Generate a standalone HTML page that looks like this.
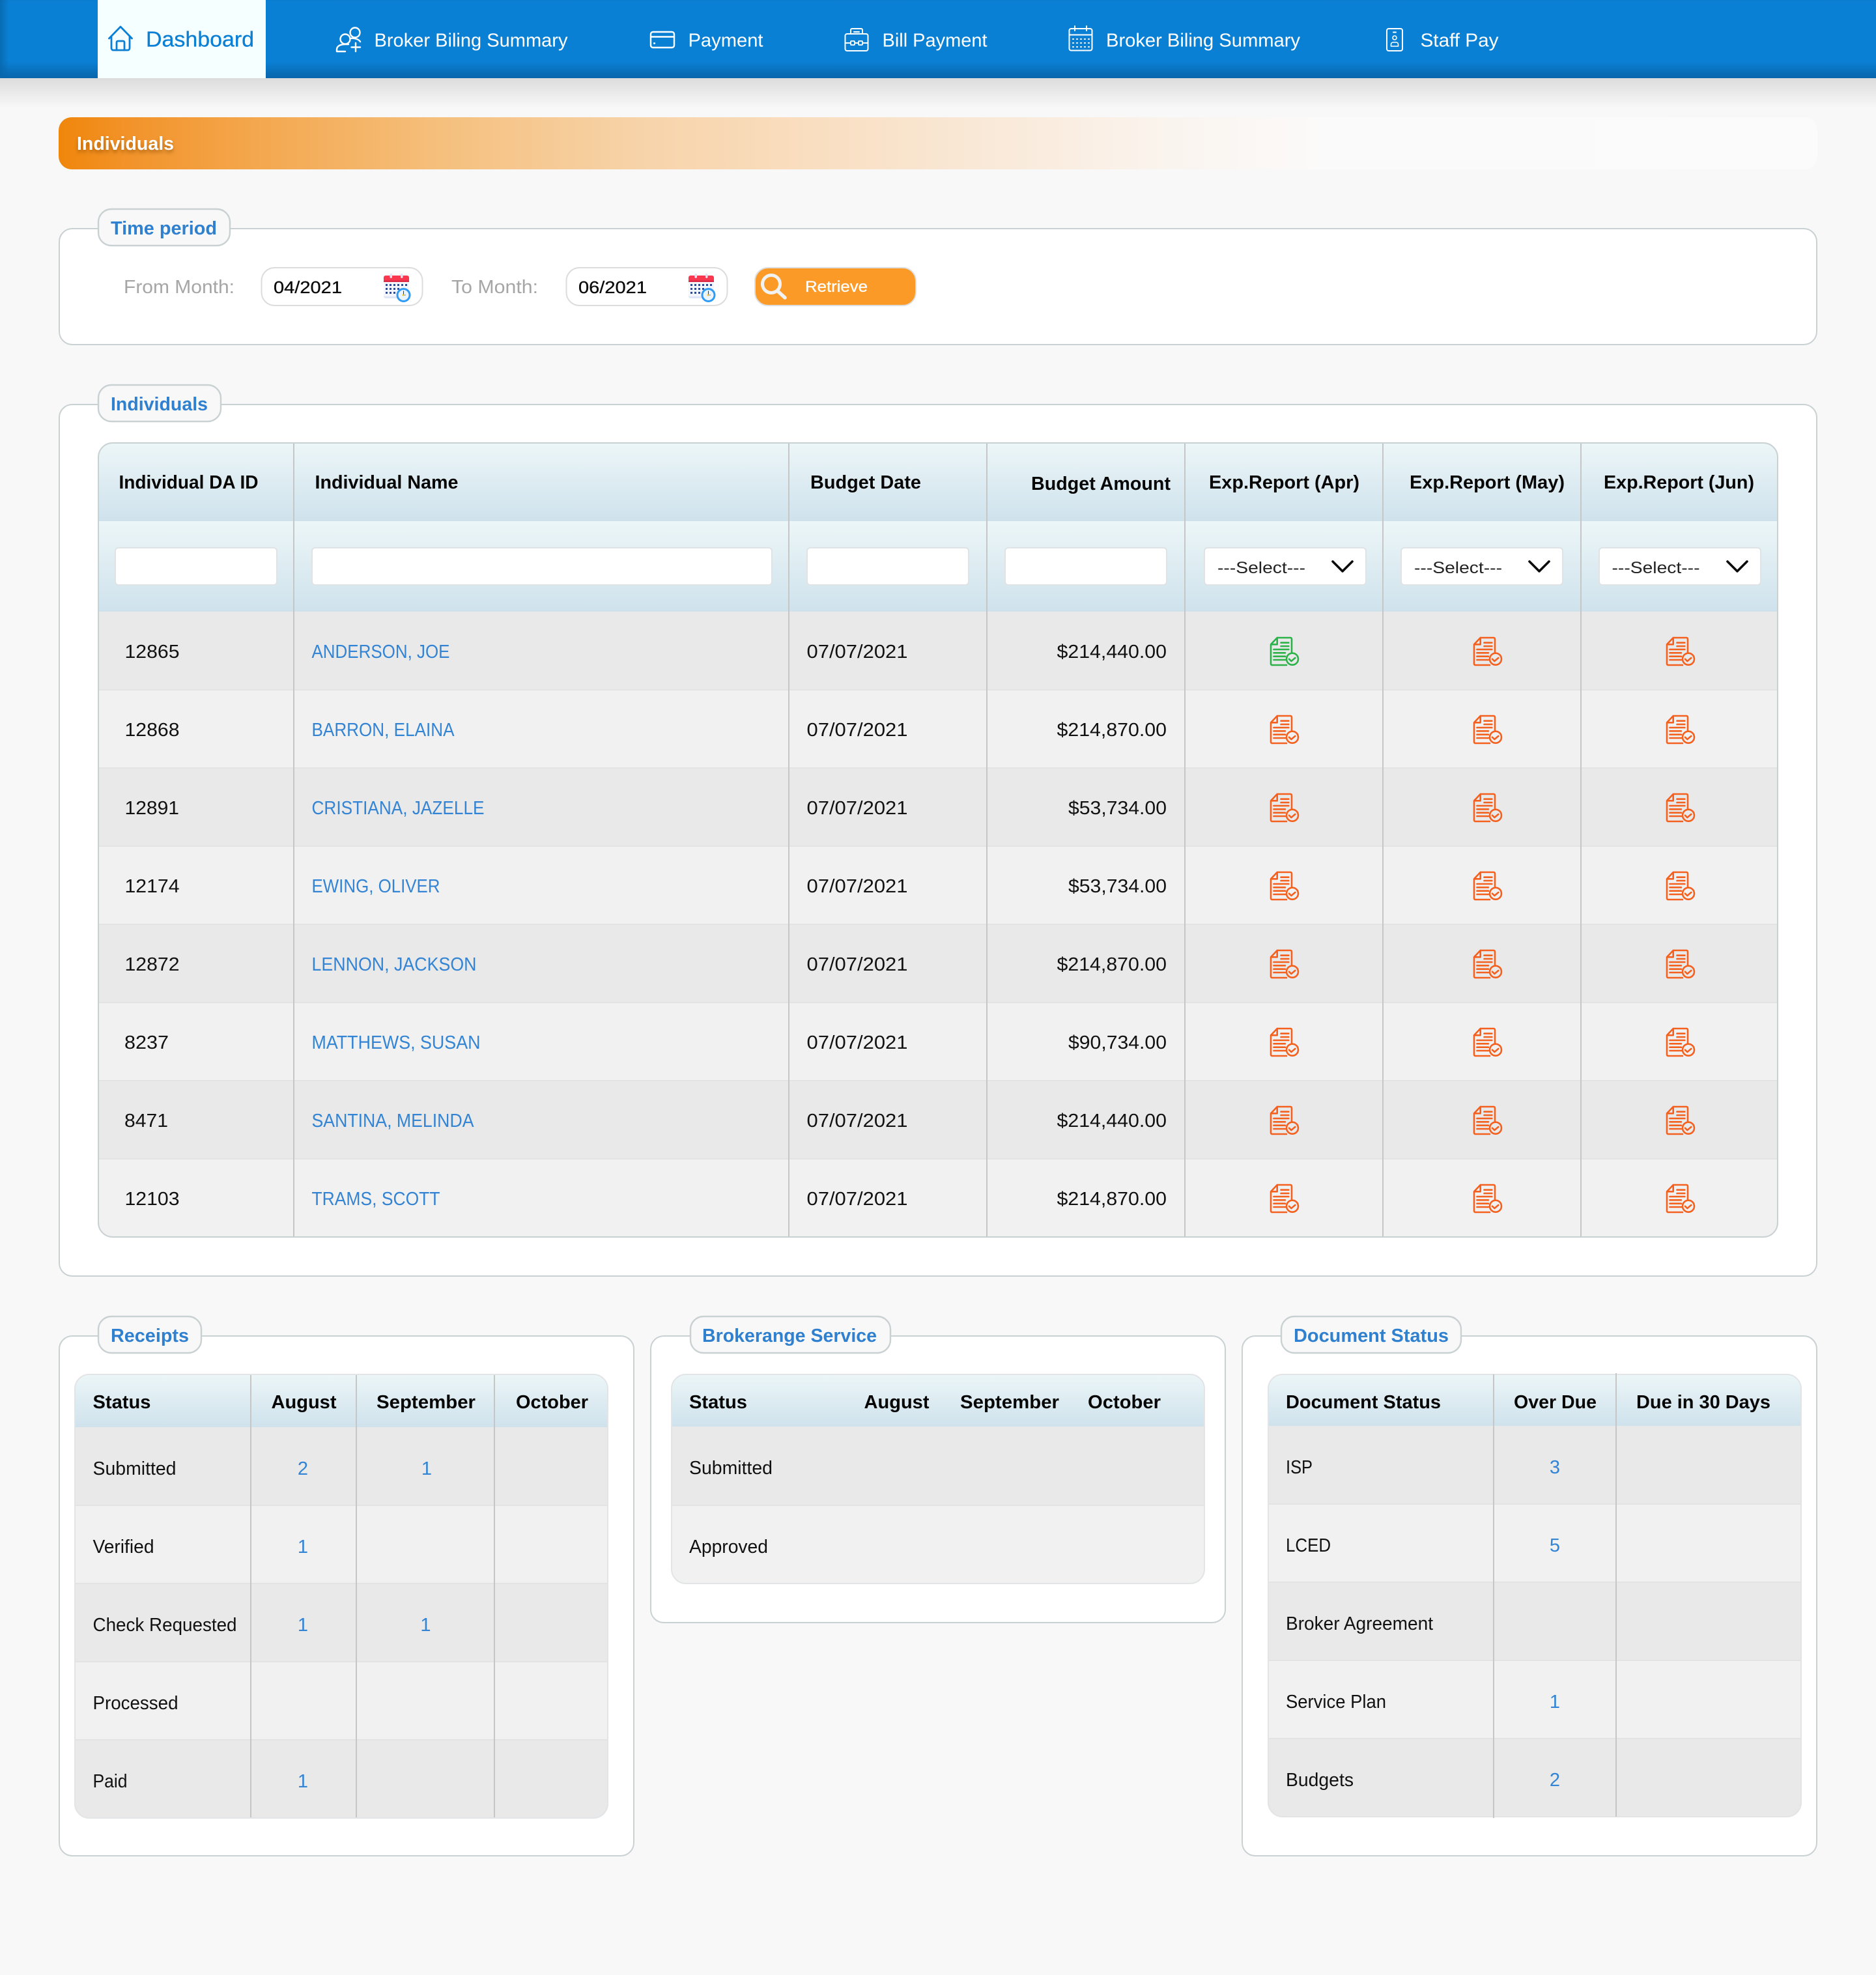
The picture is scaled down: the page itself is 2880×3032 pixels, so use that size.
<!DOCTYPE html>
<html lang="en"><head><meta charset="utf-8"><title>Individuals</title>
<style>
html,body{margin:0;padding:0;background:#f8f8f8;width:2880px;height:3032px;overflow:hidden}
svg{display:block;position:absolute;left:0;top:0}
text{font-family:"Liberation Sans",sans-serif;white-space:pre}
.r{font-size:29px;fill:#111}
.l{font-size:29px;fill:#3384d4}
.h{font-size:29px;font-weight:700;fill:#060606}
.g{font-size:29px;font-weight:700;fill:#3080d0}
.n{font-size:29px;fill:#fff}
.s{font-size:25px;fill:#222}
.v{font-size:25.5px;fill:#0a0a0a;stroke:#0a0a0a;stroke-width:.3}
.m{font-size:29px;fill:#a6a6a6}
.c{text-anchor:middle}
.f{fill:#c9d1d3}
</style></head><body>
<svg width="2880" height="3032" viewBox="0 0 2880 3032" xmlns="http://www.w3.org/2000/svg">
<defs>
<linearGradient id="nav" x1="0" y1="0" x2="0" y2="1"><stop offset="0" stop-color="#0a7dd0"/><stop offset=".05" stop-color="#0a80d5"/><stop offset=".78" stop-color="#0a80d5"/><stop offset="1" stop-color="#0866ab"/></linearGradient>
<linearGradient id="navl" x1="0" y1="0" x2="1" y2="0"><stop offset="0" stop-color="#0866ab" stop-opacity=".8"/><stop offset="1" stop-color="#0866ab" stop-opacity="0"/></linearGradient>
<linearGradient id="sh" x1="0" y1="0" x2="0" y2="1"><stop offset="0" stop-color="#dcdcdc"/><stop offset=".35" stop-color="#e6e6e6"/><stop offset="1" stop-color="#f8f8f8"/></linearGradient>
<linearGradient id="or" gradientUnits="userSpaceOnUse" x1="90" y1="0" x2="2790" y2="0">
<stop offset="0" stop-color="#f0860b"/><stop offset=".04" stop-color="#f2932a"/><stop offset=".115" stop-color="#f4a84f"/><stop offset=".22" stop-color="#f5c07e"/><stop offset=".33" stop-color="#f7d3a9"/><stop offset=".41" stop-color="#f9dcbc"/><stop offset=".52" stop-color="#f9e8d6"/><stop offset=".63" stop-color="#faf4ee"/><stop offset=".72" stop-color="#fbfafa"/><stop offset="1" stop-color="#fbfbfb"/></linearGradient>
<linearGradient id="th" x1="0" y1="0" x2="0" y2="1"><stop offset="0" stop-color="#ecf6f8"/><stop offset="1" stop-color="#cfe2ec"/></linearGradient>
<clipPath id="c1"><rect x="151" y="680" width="2578" height="1219" rx="22"/></clipPath>
<clipPath id="c2"><rect x="115" y="2110" width="818" height="681" rx="22"/></clipPath>
<clipPath id="c3"><rect x="1031" y="2110" width="818" height="321" rx="22"/></clipPath>
<clipPath id="c4"><rect x="1947" y="2110" width="818" height="679" rx="22"/></clipPath>
<g id="doc" fill="none" stroke-width="2.600" stroke-linecap="round" stroke-linejoin="round">
<path d="M10.7 1H31a2 2 0 0 1 2 2V23.500M10.7 1L1 11.300V41a2 2 0 0 0 2 2H25"/>
<path d="M10.7 2V11.300H1.500"/>
<path d="M16.500 8.700H28.300M16.500 14H28.300M5.500 19H28.300M5.500 24.300H23M5.500 29.700H23M5.500 35H23"/>
<circle cx="34" cy="33.700" r="9"/>
<path d="M29 33.800L32.300 37L38.300 32"/>
</g>
<g id="cal">
<rect x="0" y="5" width="39" height="33" rx="3" fill="#dfe6f8"/>
<rect x="0" y="5" width="39" height="30" rx="2" fill="#f4f6fd"/>
<path d="M0 13V6a3 3 0 0 1 3-3H36a3 3 0 0 1 3 3V13Z" fill="#f9384f"/>
<rect x="0" y="10.500" width="39" height="2.500" fill="#dc2a48"/>
<rect x="9.500" y="0" width="3.500" height="7" rx="1.700" fill="#dbe5f6"/>
<rect x="26" y="0" width="3.500" height="7" rx="1.700" fill="#dbe5f6"/>
<g fill="#2f4a8f"><rect x="3" y="16" width="3" height="3"/><rect x="9" y="16" width="3" height="3"/><rect x="15" y="16" width="3" height="3"/><rect x="21" y="16" width="3" height="3"/><rect x="27" y="16" width="3" height="3"/><rect x="33" y="16" width="3" height="3"/><rect x="3" y="22" width="3" height="3"/><rect x="9" y="22" width="3" height="3"/><rect x="15" y="22" width="3" height="3"/><rect x="21" y="22" width="3" height="3"/><rect x="3" y="28" width="3" height="3"/><rect x="9" y="28" width="3" height="3"/><rect x="15" y="28" width="3" height="3"/></g>
<circle cx="30.500" cy="33" r="9.500" fill="#e9f4fd" stroke="#2f9bf5" stroke-width="3"/>
<path d="M30.500 33V26.500" stroke="#333" stroke-width="1"/><path d="M30.500 33H34" stroke="#8a98a8" stroke-width="1.200"/><circle cx="30" cy="33" r="1.400" fill="#f5c518"/>
</g>
<path id="chev" d="M0 0L15 15L30 0" fill="none" stroke="#0b0b0b" stroke-width="3.600" stroke-linecap="round" stroke-linejoin="round"/>
</defs>

<rect width="2880" height="3032" fill="#f8f8f8"/>
<!-- nav -->
<rect x="0" y="120" width="2880" height="46" fill="url(#sh)"/>
<rect width="2880" height="120" fill="url(#nav)"/>
<rect width="14" height="120" fill="url(#navl)"/>
<rect x="150" width="258" height="120" fill="#f5ffff"/>
<g fill="none" stroke="#0a7fd4" stroke-width="2.800" stroke-linejoin="round" stroke-linecap="round">
<path d="M167.500 59L185 41L202.500 59M171 56V74a3 3 0 0 0 3 3H196a3 3 0 0 0 3-3V56"/>
<path d="M179 77V65a2 2 0 0 1 2-2H189a2 2 0 0 1 2 2V77"/>
</g>
<text x="224" y="71.500" font-size="33" fill="#0a7fd4" stroke="#0a7fd4" stroke-width=".3" textLength="166" lengthAdjust="spacingAndGlyphs">Dashboard</text>
<g fill="none" stroke="#fff" stroke-width="2.400" stroke-linecap="round" stroke-linejoin="round">
<circle cx="545" cy="50" r="7.500"/><circle cx="530" cy="60" r="7.500"/>
<path d="M517 79V76C517 71 522 68 530 68H535M538 59C543 58 551 60 553 64M517 79H530M546 66V79M539.500 72.500H553"/>
<rect x="999" y="49" width="36" height="24" rx="3.500"/><path d="M999 56.500H1035M1004 66.500H1005"/>
<rect x="1297.500" y="52" width="35" height="26" rx="3" stroke-width="2"/><path stroke-width="2" d="M1306 52V46a2 2 0 0 1 2-2H1322a2 2 0 0 1 2 2V52M1311 49H1319M1297.500 66H1306M1324 66H1332.500M1313 66H1317"/><rect x="1306" y="63" width="6" height="6" rx="1" stroke-width="1.800"/><rect x="1318" y="63" width="6" height="6" rx="1" stroke-width="1.800"/>
<rect x="1641.500" y="44" width="35" height="33.500" rx="3" stroke-width="2"/><path stroke-width="2" d="M1641.500 53.500H1676.500M1650 40V47M1668 40V47"/>
<path d="M1647 60H1648M1653 60H1654M1659 60H1660M1665 60H1666M1671 60H1672M1647 66H1648M1653 66H1654M1659 66H1660M1665 66H1666M1671 66H1672M1647 72H1648M1653 72H1654M1659 72H1660M1665 72H1666M1671 72H1672" stroke-width="2"/>
<rect x="2129" y="44" width="24" height="34" rx="3" stroke-width="2"/><path stroke-width="2" d="M2139 49.500H2143"/><circle cx="2141" cy="58" r="3" stroke-width="1.600"/><path stroke-width="1.600" d="M2135.500 71V68a3 3 0 0 1 3-3H2143.500a3 3 0 0 1 3 3V71Z"/>
</g>
<text class="n" x="574.500" y="71.500" textLength="297" lengthAdjust="spacingAndGlyphs">Broker Biling Summary</text>
<text class="n" x="1056.500" y="71.500" textLength="115" lengthAdjust="spacingAndGlyphs">Payment</text>
<text class="n" x="1354.500" y="71.500" textLength="161" lengthAdjust="spacingAndGlyphs">Bill Payment</text>
<text class="n" x="1698" y="71.500" textLength="298" lengthAdjust="spacingAndGlyphs">Broker Biling Summary</text>
<text class="n" x="2180.500" y="71.500" textLength="120" lengthAdjust="spacingAndGlyphs">Staff Pay</text>

<!-- page title -->
<rect x="90" y="180" width="2700" height="80" rx="20" fill="url(#or)"/>
<text x="118" y="230" font-size="29" font-weight="700" fill="#fff" textLength="149" lengthAdjust="spacingAndGlyphs" style="filter:drop-shadow(0 4px 3px rgba(130,70,0,.55))">Individuals</text>

<!-- time period -->
<rect x="91" y="351" width="2698" height="178" rx="20" fill="#fff" stroke="#c9d1d3" stroke-width="2"/>
<rect x="151" y="321" width="202" height="56" rx="20" fill="#f8f8f8" stroke="#c9d1d3" stroke-width="2.400"/>
<text class="g" x="170" y="360" textLength="163" lengthAdjust="spacingAndGlyphs">Time period</text>
<text class="m" x="190" y="450" textLength="170" lengthAdjust="spacingAndGlyphs">From Month:</text>
<rect x="401.500" y="411" width="247" height="58" rx="20" fill="#fff" stroke="#dcdcdc" stroke-width="2"/>
<text class="v" x="420" y="450" textLength="105" lengthAdjust="spacingAndGlyphs">04/2021</text>
<use href="#cal" x="589" y="420"/>
<text class="m" x="693" y="450" textLength="133" lengthAdjust="spacingAndGlyphs">To Month:</text>
<rect x="869.500" y="411" width="247" height="58" rx="20" fill="#fff" stroke="#dcdcdc" stroke-width="2"/>
<text class="v" x="888" y="450" textLength="105" lengthAdjust="spacingAndGlyphs">06/2021</text>
<use href="#cal" x="1057" y="420"/>
<rect x="1159" y="411" width="247" height="58" rx="20" fill="#fb9a26" stroke="#dedede" stroke-width="2"/>
<g fill="none" stroke="#f2f2f2" stroke-linecap="round"><circle cx="1184" cy="436" r="13.500" stroke-width="5"/><path d="M1194 447L1205 457" stroke-width="5.500"/></g>
<text x="1236" y="448" font-size="24.500" fill="#fff" textLength="96" lengthAdjust="spacingAndGlyphs" stroke="#fff" stroke-width=".3">Retrieve</text>

<!-- individuals -->
<rect x="91" y="621" width="2698" height="1338" rx="20" fill="#fff" stroke="#c9d1d3" stroke-width="2"/>
<rect x="151" y="591" width="188" height="56" rx="20" fill="#f8f8f8" stroke="#c9d1d3" stroke-width="2.400"/>
<text class="g" x="170" y="630" textLength="149" lengthAdjust="spacingAndGlyphs">Individuals</text>

<g clip-path="url(#c1)">
<rect x="150" y="680" width="2579" height="120" fill="url(#th)"/>
<rect x="150" y="800" width="2579" height="139" fill="url(#th)"/>
<rect x="150" y="939" width="2579" height="120" fill="#e9e9e9"/>
<rect x="150" y="1059" width="2579" height="120" fill="#f1f1f1"/>
<rect x="150" y="1179" width="2579" height="120" fill="#e9e9e9"/>
<rect x="150" y="1299" width="2579" height="120" fill="#f1f1f1"/>
<rect x="150" y="1419" width="2579" height="120" fill="#e9e9e9"/>
<rect x="150" y="1539" width="2579" height="120" fill="#f1f1f1"/>
<rect x="150" y="1659" width="2579" height="120" fill="#e9e9e9"/>
<rect x="150" y="1779" width="2579" height="120" fill="#f1f1f1"/>
<g fill="#e3e3e3"><rect x="150" y="1058" width="2579" height="2"/><rect x="150" y="1178" width="2579" height="2"/><rect x="150" y="1298" width="2579" height="2"/><rect x="150" y="1418" width="2579" height="2"/><rect x="150" y="1538" width="2579" height="2"/><rect x="150" y="1658" width="2579" height="2"/><rect x="150" y="1778" width="2579" height="2"/></g>
<g fill="#c6c6c6"><rect x="450" y="680" width="2" height="1219"/><rect x="1210" y="680" width="2" height="1219"/><rect x="1514" y="680" width="2" height="1219"/><rect x="1818" y="680" width="2" height="1219"/><rect x="2122" y="680" width="2" height="1219"/><rect x="2426" y="680" width="2" height="1219"/></g>
</g>
<rect x="151" y="680" width="2578" height="1219" rx="22" fill="none" stroke="#c9d1d3" stroke-width="2"/>

<text class="h" x="182.500" y="750" textLength="214" lengthAdjust="spacingAndGlyphs">Individual DA ID</text>
<text class="h" x="483.500" y="750" textLength="220" lengthAdjust="spacingAndGlyphs">Individual Name</text>
<text class="h" x="1244" y="750" textLength="170" lengthAdjust="spacingAndGlyphs">Budget Date</text>
<text class="h" x="1583" y="752" textLength="214" lengthAdjust="spacingAndGlyphs">Budget Amount</text>
<text class="h" x="1856" y="750" textLength="231" lengthAdjust="spacingAndGlyphs">Exp.Report (Apr)</text>
<text class="h" x="2164" y="750" textLength="238" lengthAdjust="spacingAndGlyphs">Exp.Report (May)</text>
<text class="h" x="2462" y="750" textLength="231" lengthAdjust="spacingAndGlyphs">Exp.Report (Jun)</text>

<g fill="#fff" stroke="#dfe3e5" stroke-width="2">
<rect x="177" y="841" width="248" height="57" rx="5"/><rect x="479" y="841" width="706" height="57" rx="5"/><rect x="1239" y="841" width="248" height="57" rx="5"/><rect x="1543" y="841" width="248" height="57" rx="5"/><rect x="1849" y="841" width="248" height="57" rx="5"/><rect x="2151" y="841" width="248" height="57" rx="5"/><rect x="2455" y="841" width="248" height="57" rx="5"/>
</g>
<text class="s" x="1869" y="880" textLength="135" lengthAdjust="spacingAndGlyphs">---Select---</text>
<text class="s" x="2171" y="880" textLength="135" lengthAdjust="spacingAndGlyphs">---Select---</text>
<text class="s" x="2474.500" y="880" textLength="135" lengthAdjust="spacingAndGlyphs">---Select---</text>
<use href="#chev" x="2046" y="862"/><use href="#chev" x="2348" y="862"/><use href="#chev" x="2652" y="862"/>

<text class="r" x="191.500" y="1010" textLength="84" lengthAdjust="spacingAndGlyphs">12865</text>
<text class="l" x="478.500" y="1010" textLength="212" lengthAdjust="spacingAndGlyphs">ANDERSON, JOE</text>
<text class="r" x="1238.500" y="1010" textLength="155" lengthAdjust="spacingAndGlyphs">07/07/2021</text>
<text class="r" x="1622.500" y="1010" textLength="168.500" lengthAdjust="spacingAndGlyphs">$214,440.00</text>

<text class="r" x="191.500" y="1130" textLength="84" lengthAdjust="spacingAndGlyphs">12868</text>
<text class="l" x="478.500" y="1130" textLength="219" lengthAdjust="spacingAndGlyphs">BARRON, ELAINA</text>
<text class="r" x="1238.500" y="1130" textLength="155" lengthAdjust="spacingAndGlyphs">07/07/2021</text>
<text class="r" x="1622.500" y="1130" textLength="168.500" lengthAdjust="spacingAndGlyphs">$214,870.00</text>

<text class="r" x="191.500" y="1250" textLength="83.500" lengthAdjust="spacingAndGlyphs">12891</text>
<text class="l" x="478.500" y="1250" textLength="265" lengthAdjust="spacingAndGlyphs">CRISTIANA, JAZELLE</text>
<text class="r" x="1238.500" y="1250" textLength="155" lengthAdjust="spacingAndGlyphs">07/07/2021</text>
<text class="r" x="1640" y="1250" textLength="151" lengthAdjust="spacingAndGlyphs">$53,734.00</text>

<text class="r" x="191.500" y="1370" textLength="84" lengthAdjust="spacingAndGlyphs">12174</text>
<text class="l" x="478.500" y="1370" textLength="197" lengthAdjust="spacingAndGlyphs">EWING, OLIVER</text>
<text class="r" x="1238.500" y="1370" textLength="155" lengthAdjust="spacingAndGlyphs">07/07/2021</text>
<text class="r" x="1640" y="1370" textLength="151" lengthAdjust="spacingAndGlyphs">$53,734.00</text>

<text class="r" x="191.500" y="1490" textLength="84" lengthAdjust="spacingAndGlyphs">12872</text>
<text class="l" x="478.500" y="1490" textLength="253" lengthAdjust="spacingAndGlyphs">LENNON, JACKSON</text>
<text class="r" x="1238.500" y="1490" textLength="155" lengthAdjust="spacingAndGlyphs">07/07/2021</text>
<text class="r" x="1622.500" y="1490" textLength="168.500" lengthAdjust="spacingAndGlyphs">$214,870.00</text>

<text class="r" x="191" y="1610" textLength="68" lengthAdjust="spacingAndGlyphs">8237</text>
<text class="l" x="478.500" y="1610" textLength="259" lengthAdjust="spacingAndGlyphs">MATTHEWS, SUSAN</text>
<text class="r" x="1238.500" y="1610" textLength="155" lengthAdjust="spacingAndGlyphs">07/07/2021</text>
<text class="r" x="1640" y="1610" textLength="151" lengthAdjust="spacingAndGlyphs">$90,734.00</text>

<text class="r" x="191" y="1730" textLength="67" lengthAdjust="spacingAndGlyphs">8471</text>
<text class="l" x="478.500" y="1730" textLength="249" lengthAdjust="spacingAndGlyphs">SANTINA, MELINDA</text>
<text class="r" x="1238.500" y="1730" textLength="155" lengthAdjust="spacingAndGlyphs">07/07/2021</text>
<text class="r" x="1622.500" y="1730" textLength="168.500" lengthAdjust="spacingAndGlyphs">$214,440.00</text>

<text class="r" x="191.500" y="1850" textLength="84" lengthAdjust="spacingAndGlyphs">12103</text>
<text class="l" x="478.500" y="1850" textLength="197" lengthAdjust="spacingAndGlyphs">TRAMS, SCOTT</text>
<text class="r" x="1238.500" y="1850" textLength="155" lengthAdjust="spacingAndGlyphs">07/07/2021</text>
<text class="r" x="1622.500" y="1850" textLength="168.500" lengthAdjust="spacingAndGlyphs">$214,870.00</text>

<use href="#doc" x="1950" y="978" stroke="#2bb34a"/><use href="#doc" x="2262" y="978" stroke="#f4611e"/><use href="#doc" x="2558" y="978" stroke="#f4611e"/>
<g stroke="#f4611e">
<use href="#doc" x="1950" y="1098"/><use href="#doc" x="2262" y="1098"/><use href="#doc" x="2558" y="1098"/>
<use href="#doc" x="1950" y="1218"/><use href="#doc" x="2262" y="1218"/><use href="#doc" x="2558" y="1218"/>
<use href="#doc" x="1950" y="1338"/><use href="#doc" x="2262" y="1338"/><use href="#doc" x="2558" y="1338"/>
<use href="#doc" x="1950" y="1458"/><use href="#doc" x="2262" y="1458"/><use href="#doc" x="2558" y="1458"/>
<use href="#doc" x="1950" y="1578"/><use href="#doc" x="2262" y="1578"/><use href="#doc" x="2558" y="1578"/>
<use href="#doc" x="1950" y="1698"/><use href="#doc" x="2262" y="1698"/><use href="#doc" x="2558" y="1698"/>
<use href="#doc" x="1950" y="1818"/><use href="#doc" x="2262" y="1818"/><use href="#doc" x="2558" y="1818"/>
</g>

<!-- receipts -->
<rect x="91" y="2051" width="882" height="798" rx="20" fill="#fff" stroke="#c9d1d3" stroke-width="2"/>
<rect x="151" y="2021" width="158" height="56" rx="20" fill="#f8f8f8" stroke="#c9d1d3" stroke-width="2.400"/>
<text class="g" x="170" y="2060" textLength="120" lengthAdjust="spacingAndGlyphs">Receipts</text>
<g clip-path="url(#c2)">
<rect x="115" y="2110" width="818" height="81" fill="url(#th)"/>
<rect x="115" y="2191" width="818" height="120" fill="#e9e9e9"/><rect x="115" y="2311" width="818" height="120" fill="#f1f1f1"/><rect x="115" y="2431" width="818" height="120" fill="#e9e9e9"/><rect x="115" y="2551" width="818" height="120" fill="#f1f1f1"/><rect x="115" y="2671" width="818" height="120" fill="#e9e9e9"/>
<g fill="#e3e3e3"><rect x="115" y="2310" width="818" height="2"/><rect x="115" y="2430" width="818" height="2"/><rect x="115" y="2550" width="818" height="2"/><rect x="115" y="2670" width="818" height="2"/></g>
<g fill="#c6c6c6"><rect x="384" y="2110" width="2" height="681"/><rect x="546" y="2110" width="2" height="681"/><rect x="758" y="2110" width="2" height="681"/></g>
</g>
<rect x="115" y="2110" width="818" height="681" rx="22" fill="none" stroke="#e2e4e5" stroke-width="2"/>
<text class="h" x="142.500" y="2162" textLength="89" lengthAdjust="spacingAndGlyphs">Status</text>
<text class="h" x="416.500" y="2162" textLength="100" lengthAdjust="spacingAndGlyphs">August</text>
<text class="h" x="578" y="2162" textLength="152" lengthAdjust="spacingAndGlyphs">September</text>
<text class="h" x="792" y="2162" textLength="111" lengthAdjust="spacingAndGlyphs">October</text>
<text class="r" x="142.500" y="2264" textLength="128" lengthAdjust="spacingAndGlyphs">Submitted</text>
<text class="r" x="142.500" y="2384" textLength="94" lengthAdjust="spacingAndGlyphs">Verified</text>
<text class="r" x="142.500" y="2504" textLength="221" lengthAdjust="spacingAndGlyphs">Check Requested</text>
<text class="r" x="142.500" y="2624" textLength="131" lengthAdjust="spacingAndGlyphs">Processed</text>
<text class="r" x="142.500" y="2744" textLength="53" lengthAdjust="spacingAndGlyphs">Paid</text>
<text class="l c" x="465" y="2264">2</text><text class="l c" x="655" y="2264">1</text>
<text class="l c" x="465" y="2384">1</text>
<text class="l c" x="465" y="2504">1</text><text class="l c" x="653.500" y="2504">1</text>
<text class="l c" x="465" y="2744">1</text>

<!-- brokerage -->
<rect x="999" y="2051" width="882" height="440" rx="20" fill="#fff" stroke="#c9d1d3" stroke-width="2"/>
<rect x="1060" y="2021" width="307" height="56" rx="20" fill="#f8f8f8" stroke="#c9d1d3" stroke-width="2.400"/>
<text class="g" x="1078" y="2060" textLength="268" lengthAdjust="spacingAndGlyphs">Brokerange Service</text>
<g clip-path="url(#c3)">
<rect x="1031" y="2110" width="818" height="80" fill="url(#th)"/>
<rect x="1031" y="2190" width="818" height="121" fill="#e9e9e9"/><rect x="1031" y="2311" width="818" height="120" fill="#f1f1f1"/>
<rect x="1031" y="2310" width="818" height="2" fill="#e3e3e3"/>
</g>
<rect x="1031" y="2110" width="818" height="321" rx="22" fill="none" stroke="#e2e4e5" stroke-width="2"/>
<text class="h" x="1058" y="2162" textLength="89" lengthAdjust="spacingAndGlyphs">Status</text>
<text class="h" x="1326.500" y="2162" textLength="100" lengthAdjust="spacingAndGlyphs">August</text>
<text class="h" x="1474" y="2162" textLength="152" lengthAdjust="spacingAndGlyphs">September</text>
<text class="h" x="1670" y="2162" textLength="112" lengthAdjust="spacingAndGlyphs">October</text>
<text class="r" x="1058" y="2263" textLength="128" lengthAdjust="spacingAndGlyphs">Submitted</text>
<text class="r" x="1058" y="2384" textLength="121" lengthAdjust="spacingAndGlyphs">Approved</text>

<!-- document status -->
<rect x="1907" y="2051" width="882" height="798" rx="20" fill="#fff" stroke="#c9d1d3" stroke-width="2"/>
<rect x="1967" y="2021" width="276" height="56" rx="20" fill="#f8f8f8" stroke="#c9d1d3" stroke-width="2.400"/>
<text class="g" x="1986" y="2060" textLength="238" lengthAdjust="spacingAndGlyphs">Document Status</text>
<g clip-path="url(#c4)">
<rect x="1947" y="2110" width="818" height="79" fill="url(#th)"/>
<rect x="1947" y="2189" width="818" height="120" fill="#e9e9e9"/><rect x="1947" y="2309" width="818" height="120" fill="#f1f1f1"/><rect x="1947" y="2429" width="818" height="120" fill="#e9e9e9"/><rect x="1947" y="2549" width="818" height="120" fill="#f1f1f1"/><rect x="1947" y="2669" width="818" height="120" fill="#e9e9e9"/>
<g fill="#e3e3e3"><rect x="1947" y="2308" width="818" height="2"/><rect x="1947" y="2428" width="818" height="2"/><rect x="1947" y="2548" width="818" height="2"/><rect x="1947" y="2668" width="818" height="2"/></g>
</g>
<rect x="1947" y="2110" width="818" height="679" rx="22" fill="none" stroke="#e2e4e5" stroke-width="2"/>
<g fill="#c6c6c6"><rect x="2292" y="2110" width="2" height="681"/><rect x="2480" y="2108" width="2" height="681"/></g>
<text class="h" x="1974" y="2162" textLength="238" lengthAdjust="spacingAndGlyphs">Document Status</text>
<text class="h" x="2324" y="2162" textLength="127" lengthAdjust="spacingAndGlyphs">Over Due</text>
<text class="h" x="2512" y="2162" textLength="206" lengthAdjust="spacingAndGlyphs">Due in 30 Days</text>
<text class="r" x="1974" y="2262" textLength="41" lengthAdjust="spacingAndGlyphs">ISP</text>
<text class="r" x="1974" y="2382" textLength="69" lengthAdjust="spacingAndGlyphs">LCED</text>
<text class="r" x="1974" y="2502" textLength="226" lengthAdjust="spacingAndGlyphs">Broker Agreement</text>
<text class="r" x="1974" y="2622" textLength="154" lengthAdjust="spacingAndGlyphs">Service Plan</text>
<text class="r" x="1974" y="2742" textLength="104" lengthAdjust="spacingAndGlyphs">Budgets</text>
<text class="l c" x="2387" y="2262">3</text><text class="l c" x="2387" y="2382">5</text><text class="l c" x="2387" y="2622">1</text><text class="l c" x="2387" y="2742">2</text>
</svg>
</body></html>
